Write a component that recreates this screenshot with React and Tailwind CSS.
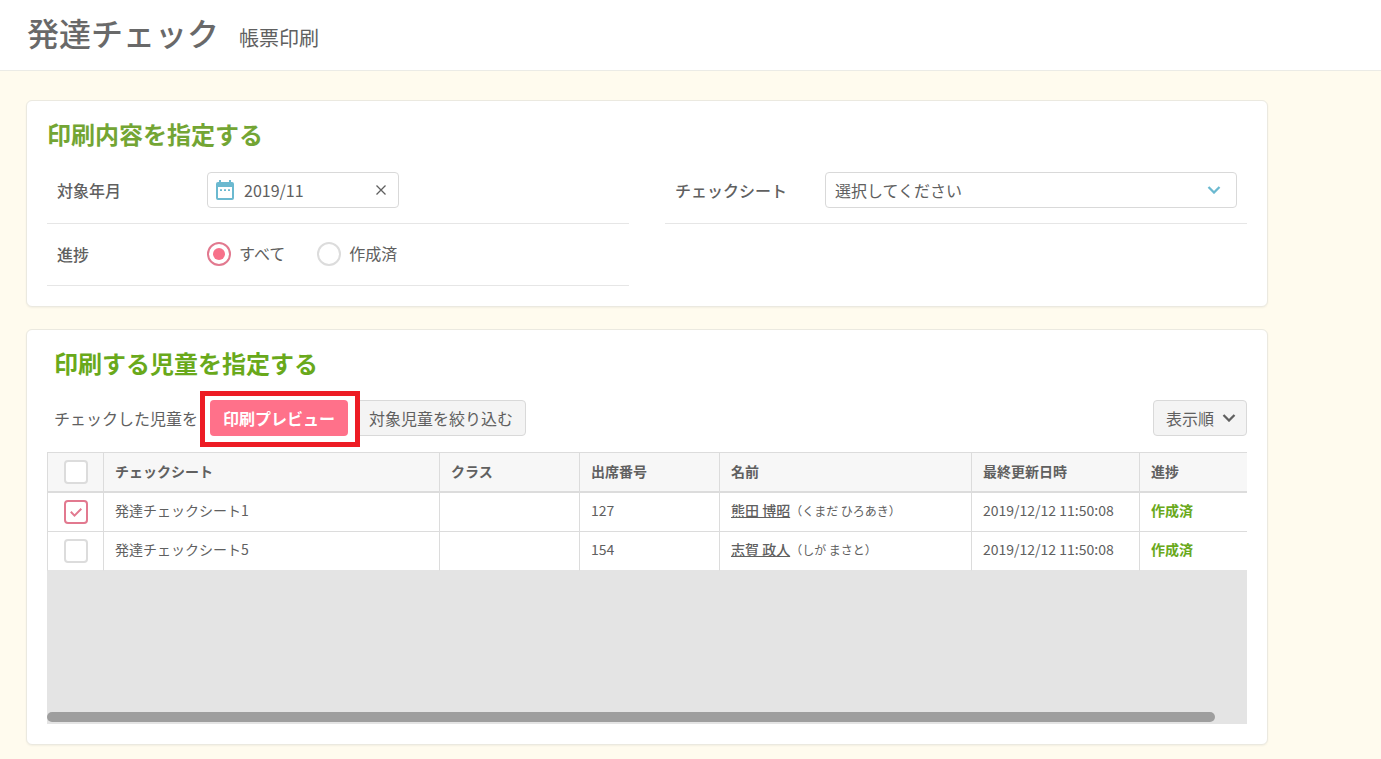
import { useState } from "react";

const ROWS = [
  { id: 1, sheet: "発達チェックシート1", cls: "", no: "127", name: "熊田 博昭", kana: "（くまだ ひろあき）", updated: "2019/12/12 11:50:08", status: "作成済" },
  { id: 2, sheet: "発達チェックシート5", cls: "", no: "154", name: "志賀 政人", kana: "（しが まさと）", updated: "2019/12/12 11:50:08", status: "作成済" },
];

const COLUMNS = ["チェックシート", "クラス", "出席番号", "名前", "最終更新日時", "進捗"];

function CalendarIcon() {
  return (
    <svg viewBox="0 0 18 20" className="h-5 w-[18px] shrink-0" aria-hidden="true">
      <path fill="#6bb9d0" fillRule="evenodd" d="M3 0h2v2h8V0h2v2h1a2 2 0 0 1 2 2v14a2 2 0 0 1-2 2H2a2 2 0 0 1-2-2V4a2 2 0 0 1 2-2h1zM2 7v11h14V7z" />
      <path fill="#6bb9d0" d="M4 9.300h2v1.700H4zM8 9.300h2v1.700H8zM12 9.300h2v1.700h-2z" />
    </svg>
  );
}

function Chevron({ className }) {
  return (
    <svg viewBox="0 0 14 8" className={className} fill="none" stroke="currentColor" aria-hidden="true">
      <path d="M1.5 1 7 6.5 12.5 1" strokeWidth="2.3" />
    </svg>
  );
}

function Checkbox({ label, checked, onChange }) {
  return (
    <span className="relative mx-auto block size-6">
      <input
        type="checkbox"
        aria-label={label}
        checked={checked}
        onChange={onChange}
        className="peer block size-6 appearance-none rounded border-2 border-[#dcdcdc] bg-white checked:border-[#e2798f]"
      />
      <svg viewBox="0 0 24 24" className="pointer-events-none absolute inset-0 hidden size-6 peer-checked:block" fill="none" stroke="#e2798f" strokeWidth="2" aria-hidden="true">
        <path d="M6.800 11.800 10.500 15.600 17.300 8.800" />
      </svg>
    </span>
  );
}

function Radio({ label, checked, onChange }) {
  return (
    <label className="flex items-center gap-2">
      <span className="relative block size-6">
        <input
          type="radio"
          name="progress"
          checked={checked}
          onChange={onChange}
          className="peer block size-6 appearance-none rounded-full border-2 border-[#dcdcdc] bg-white checked:border-[#e2798f]"
        />
        <span className="pointer-events-none absolute inset-1.5 hidden rounded-full bg-[#f7718a] peer-checked:block" />
      </span>
      <span className="pb-0.5">{label}</span>
    </label>
  );
}

export default function App() {
  const [month, setMonth] = useState("2019/11");
  const [progress, setProgress] = useState("all");
  const [selected, setSelected] = useState([1]);
  const toggle = (id) => setSelected((s) => (s.includes(id) ? s.filter((x) => x !== id) : [...s, id]));
  const all = selected.length === ROWS.length;

  return (
    <div className="flex min-h-screen flex-col bg-[#fffbee] font-['Noto_Sans_CJK_JP',sans-serif] text-base text-[#606060]">
      <header className="flex items-baseline gap-5 border-b border-[#ebebe6] bg-white px-[27px] pt-2 pb-3.5">
        <h1 className="text-[32px] leading-[48px] font-medium text-[#696969]">発達チェック</h1>
        <p className="text-xl">帳票印刷</p>
      </header>

      <main className="flex max-w-[1294px] flex-col gap-[22px] px-[26px] pt-[29px] pb-3.5">
        <section className="rounded-md border border-[#ebe9e0] bg-white px-5 pt-[15px] pb-5 shadow-xs">
          <h2 className="text-2xl leading-9 font-bold text-[#73a534]">印刷内容を指定する</h2>
          <div className="grid grid-cols-2 gap-x-9 pt-2">
            <div className="flex h-16 items-center border-b border-[#e6e6e6] px-2.5 pb-1">
              <label htmlFor="month" className="w-[150px] shrink-0 font-medium">対象年月</label>
              <div className="flex h-9 w-48 items-center gap-2.5 rounded border border-[#d9d9d9] bg-white pr-[7px] pl-2">
                <CalendarIcon />
                <input id="month" type="text" value={month} onChange={(e) => setMonth(e.target.value)} className="min-w-0 flex-1 bg-transparent outline-none" />
                <button type="button" aria-label="クリア" onClick={() => setMonth("")} className="flex size-5 shrink-0 items-center justify-center">
                  <svg viewBox="0 0 10 10" className="size-2.5" fill="none" stroke="#606060" strokeWidth="1.3" aria-hidden="true">
                    <path d="M.5.5l9 9M9.500.5l-9 9" />
                  </svg>
                </button>
              </div>
            </div>
            <div className="flex h-16 items-center border-b border-[#e6e6e6] px-2.5 pb-1">
              <label htmlFor="sheet" className="w-[150px] shrink-0 font-medium">チェックシート</label>
              <div className="relative flex-1">
                <select id="sheet" className="block h-9 w-full appearance-none rounded border border-[#d9d9d9] bg-white px-[9px]">
                  <option>選択してください</option>
                </select>
                <Chevron className="pointer-events-none absolute top-3.5 right-4 h-2 w-3.5 text-[#6bb9d0]" />
              </div>
            </div>
            <div role="radiogroup" aria-labelledby="progress-label" className="flex h-[62px] items-center border-b border-[#e6e6e6] px-2.5 pb-0.5">
              <span id="progress-label" className="w-[150px] shrink-0 font-medium">進捗</span>
              <div className="flex gap-8">
                <Radio label="すべて" checked={progress === "all"} onChange={() => setProgress("all")} />
                <Radio label="作成済" checked={progress === "done"} onChange={() => setProgress("done")} />
              </div>
            </div>
          </div>
        </section>

        <section className="rounded-md border border-[#ebe9e0] bg-white px-5 pt-[15px] pb-5 shadow-xs">
          <h2 className="pl-[7px] text-2xl leading-9 font-bold text-[#69a91b]">印刷する児童を指定する</h2>
          <div className="flex items-center pt-[19px] pl-[7px]">
            <span className="mr-3">チェックした児童を</span>
            <div className="relative z-10 mr-2">
              <button type="button" className="block h-9 rounded bg-[#ff718a] px-[13px] font-bold text-white">印刷プレビュー</button>
              <span className="pointer-events-none absolute -top-[9px] -right-3 -bottom-[11px] -left-2.5 border-5 border-[#ed1c24]" />
            </div>
            <button type="button" className="h-9 rounded border border-[#d9d9d9] bg-[#f4f4f4] px-3">対象児童を絞り込む</button>
            <button type="button" className="ml-auto flex h-9 items-center gap-2 rounded border border-[#d9d9d9] bg-[#f4f4f4] pr-[10px] pl-3">
              表示順
              <Chevron className="h-2 w-3.5" />
            </button>
          </div>

          <div className="mt-4 h-[272px] overflow-hidden bg-[#e4e4e4]">
            <div className="flex h-full flex-col justify-between">
              <table className="w-full table-fixed border-separate border-spacing-0 text-left text-sm">
                <colgroup>
                  <col className="w-14" />
                  <col className="w-[28%]" />
                  <col className="w-[140px]" />
                  <col className="w-[140px]" />
                  <col className="w-[21%]" />
                  <col className="w-[168px]" />
                  <col className="w-[108px]" />
                </colgroup>
                <thead>
                  <tr className="h-[41px] bg-[#f7f7f7]">
                    <th scope="col" className="border-t border-b-2 border-l border-[#dcdcdc] p-0">
                      <Checkbox label="すべて選択" checked={all} onChange={() => setSelected(all ? [] : ROWS.map((r) => r.id))} />
                    </th>
                    {COLUMNS.map((c) => (
                      <th key={c} scope="col" className="border-t border-b-2 border-l border-[#dcdcdc] pt-0 pr-2 pb-0.5 pl-[11px] font-bold">{c}</th>
                    ))}
                  </tr>
                </thead>
                <tbody className="[&_td]:border-b [&_td]:border-l [&_td]:border-[#dcdcdc] [&_td]:pt-0 [&_td]:pr-2 [&_td]:pb-1 [&_td]:pl-[11px] [&_tr:last-child_td]:border-b-[#e4e4e4]">
                  {ROWS.map((r) => (
                    <tr key={r.id} className="h-[39px] bg-white">
                      <td className="p-0!"><Checkbox label={r.sheet} checked={selected.includes(r.id)} onChange={() => toggle(r.id)} /></td>
                      <td>{r.sheet}</td>
                      <td>{r.cls}</td>
                      <td>{r.no}</td>
                      <td className="whitespace-nowrap">
                        <a href="#" className="font-medium underline">{r.name}</a>
                        <span className="text-xs">{r.kana}</span>
                      </td>
                      <td className="whitespace-nowrap">{r.updated}</td>
                      <td className="font-bold text-[#69a91b]">{r.status}</td>
                    </tr>
                  ))}
                </tbody>
              </table>
              <div className="pr-8 pb-0.5">
                <div className="h-2.5 rounded-full bg-[#9e9e9e]" />
              </div>
            </div>
          </div>
        </section>
      </main>
    </div>
  );
}
